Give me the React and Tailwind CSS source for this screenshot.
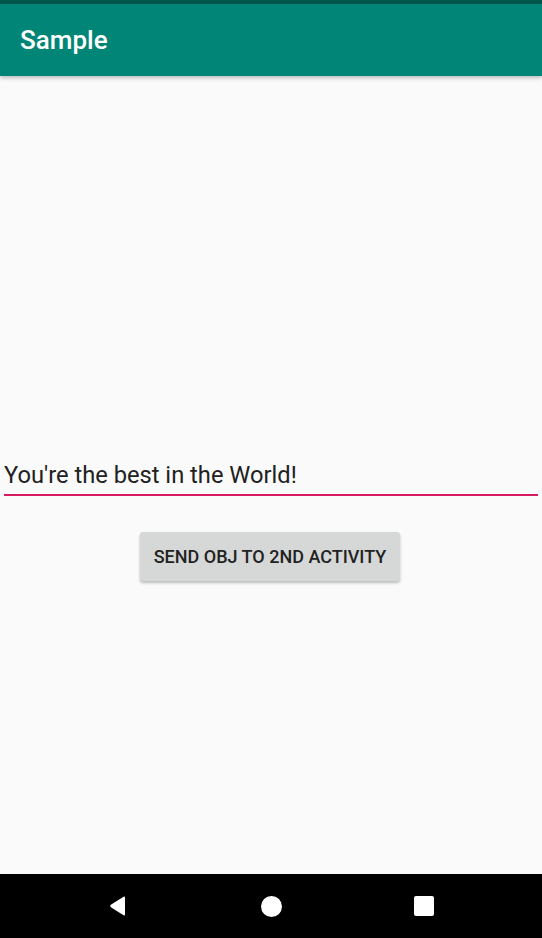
import React from "react";

export default function App() {
  return (
    <div className="flex h-[938px] w-[542px] flex-col overflow-hidden bg-[#fafafa] font-['Roboto',sans-serif]">
      <div className="h-[4px] bg-[#00574b]" />
      <header className="relative z-10 flex h-[72px] items-center bg-[#008577] pl-[20px] shadow-[0_2px_4px_rgba(0,0,0,0.25)]">
        <h1 className="text-[26px] font-medium leading-none text-white">Sample</h1>
      </header>
      <main className="flex flex-1 flex-col pt-[385px]">
        <div className="mx-[4px] flex flex-col">
          <div className="text-[23.7px] leading-[28px] text-[#212121]">You're the best in the World!</div>
          <div className="mt-[5px] h-[2px] bg-[#d81b60]" />
        </div>
        <div className="mt-[36px] flex justify-center">
          <button className="ml-[-2px] flex h-[49px] w-[260px] items-center justify-center rounded-[3px] bg-[#d6d7d7] text-[18px] font-medium text-[#222] shadow-[0_2px_3px_rgba(0,0,0,0.25)]">
            SEND OBJ TO 2ND ACTIVITY
          </button>
        </div>
      </main>
      <nav className="flex h-[64px] items-center justify-center gap-[113px] bg-black">
        <div className="flex w-[40px] justify-center">
          <svg width="20" height="22" viewBox="0 0 20 22">
            <path d="M17 2.5 L17 19.5 Q17 21 15.6 20.3 L2.8 12.2 Q1.5 11 2.8 9.8 L15.6 1.7 Q17 1 17 2.5 Z" fill="white" />
          </svg>
        </div>
        <div className="flex w-[40px] justify-center">
          <div className="h-[21px] w-[21px] rounded-full bg-white" />
        </div>
        <div className="flex w-[40px] justify-center">
          <div className="h-[20px] w-[20px] rounded-[2px] bg-white" />
        </div>
      </nav>
    </div>
  );
}
